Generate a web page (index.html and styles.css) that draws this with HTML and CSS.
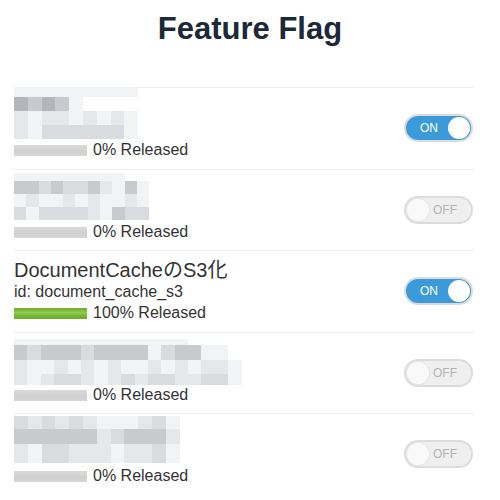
FILE: index.html
```html
<!DOCTYPE html>
<html lang="ja">
<head>
<meta charset="utf-8">
<title>Feature Flag</title>
<link rel="stylesheet" href="styles.css">
</head>
<body>
<h1 class="page-title">Feature Flag</h1>
<ul class="flag-list">
  <li class="flag-row">
    <div class="flag-info">
      <div class="title-area">
        <div class="mosaic m1">
          <i class="c1"></i><i class="c1"></i><i class="c1"></i><i class="c1"></i><i class="c1"></i><i class="c1"></i><i class="c1"></i><i class="c1"></i><i class="c1"></i>
          <i class="c5"></i><i class="c4"></i><i class="c5"></i><i class="c4"></i><i class="c1"></i><i class="c0"></i><i class="c0"></i><i class="c0"></i><i class="c0"></i>
          <i class="c2"></i><i class="c1"></i><i class="c2"></i><i class="c2"></i><i class="c1"></i><i class="c2"></i><i class="c1"></i><i class="c2"></i><i class="c1"></i>
          <i class="c2"></i><i class="c1"></i><i class="c3"></i><i class="c3"></i><i class="c3"></i><i class="c3"></i><i class="c3"></i><i class="c3"></i><i class="c1"></i>
        </div>
      </div>
      <div class="progress-line"><span class="bar"><span class="fill"></span></span><span class="pct">0% Released</span></div>
    </div>
    <div class="toggle on"><span class="label">ON</span><span class="knob"></span></div>
  </li>
  <li class="flag-row">
    <div class="flag-info">
      <div class="title-area">
        <div class="mosaic m2">
          <i class="c1"></i><i class="c1"></i><i class="c1"></i><i class="c1"></i><i class="c1"></i><i class="c1"></i><i class="c1"></i><i class="c1"></i><i class="c1"></i><i class="c0"></i><i class="c0"></i>
          <i class="c4"></i><i class="c4"></i><i class="c3"></i><i class="c4"></i><i class="c3"></i><i class="c3"></i><i class="c4"></i><i class="c2"></i><i class="c1"></i><i class="c4"></i><i class="c1"></i>
          <i class="c1"></i><i class="c2"></i><i class="c1"></i><i class="c1"></i><i class="c2"></i><i class="c1"></i><i class="c2"></i><i class="c1"></i><i class="c1"></i><i class="c2"></i><i class="c1"></i>
          <i class="c3"></i><i class="c1"></i><i class="c3"></i><i class="c3"></i><i class="c3"></i><i class="c3"></i><i class="c2"></i><i class="c1"></i><i class="c4"></i><i class="c3"></i><i class="c3"></i>
        </div>
      </div>
      <div class="progress-line"><span class="bar"><span class="fill"></span></span><span class="pct">0% Released</span></div>
    </div>
    <div class="toggle off"><span class="knob"></span><span class="label">OFF</span></div>
  </li>
  <li class="flag-row">
    <div class="flag-info">
      <div class="title-area">
        <div class="flag-name">DocumentCacheのS3化</div>
        <div class="flag-id">id: document_cache_s3</div>
      </div>
      <div class="progress-line"><span class="bar"><span class="fill full"></span></span><span class="pct">100% Released</span></div>
    </div>
    <div class="toggle on"><span class="label">ON</span><span class="knob"></span></div>
  </li>
  <li class="flag-row">
    <div class="flag-info">
      <div class="title-area">
        <div class="mosaic m4">
          <i class="c1"></i><i class="c1"></i><i class="c1"></i><i class="c1"></i><i class="c1"></i><i class="c1"></i><i class="c1"></i><i class="c1"></i><i class="c1"></i><i class="c1"></i><i class="c1"></i><i class="c1"></i><i class="c1"></i><i class="c0"></i><i class="c0"></i><i class="c0"></i><i class="c0"></i>
          <i class="c4"></i><i class="c3"></i><i class="c4"></i><i class="c4"></i><i class="c4"></i><i class="c3"></i><i class="c4"></i><i class="c4"></i><i class="c4"></i><i class="c4"></i><i class="c1"></i><i class="c3"></i><i class="c4"></i><i class="c4"></i><i class="c1"></i><i class="c1"></i><i class="c0"></i>
          <i class="c2"></i><i class="c1"></i><i class="c1"></i><i class="c2"></i><i class="c1"></i><i class="c2"></i><i class="c1"></i><i class="c2"></i><i class="c1"></i><i class="c1"></i><i class="c2"></i><i class="c1"></i><i class="c2"></i><i class="c1"></i><i class="c2"></i><i class="c2"></i><i class="c1"></i>
          <i class="c2"></i><i class="c1"></i><i class="c2"></i><i class="c3"></i><i class="c3"></i><i class="c2"></i><i class="c1"></i><i class="c2"></i><i class="c3"></i><i class="c2"></i><i class="c3"></i><i class="c3"></i><i class="c2"></i><i class="c2"></i><i class="c3"></i><i class="c3"></i><i class="c1"></i>
        </div>
      </div>
      <div class="progress-line"><span class="bar"><span class="fill"></span></span><span class="pct">0% Released</span></div>
    </div>
    <div class="toggle off"><span class="knob"></span><span class="label">OFF</span></div>
  </li>
  <li class="flag-row">
    <div class="flag-info">
      <div class="title-area">
        <div class="mosaic m5">
          <i class="c3"></i><i class="c2"></i><i class="c3"></i><i class="c2"></i><i class="c3"></i><i class="c2"></i><i class="c1"></i><i class="c1"></i><i class="c1"></i><i class="c2"></i><i class="c3"></i><i class="c1"></i>
          <i class="c4"></i><i class="c4"></i><i class="c4"></i><i class="c4"></i><i class="c4"></i><i class="c4"></i><i class="c2"></i><i class="c3"></i><i class="c4"></i><i class="c4"></i><i class="c4"></i><i class="c2"></i>
          <i class="c2"></i><i class="c1"></i><i class="c3"></i><i class="c3"></i><i class="c2"></i><i class="c2"></i><i class="c2"></i><i class="c1"></i><i class="c2"></i><i class="c2"></i><i class="c3"></i><i class="c1"></i>
        </div>
      </div>
      <div class="progress-line"><span class="bar"><span class="fill"></span></span><span class="pct">0% Released</span></div>
    </div>
    <div class="toggle off"><span class="knob"></span><span class="label">OFF</span></div>
  </li>
</ul>
</body>
</html>
```
FILE: styles.css
```css
html, body {
  margin: 0;
  padding: 0;
  background: #ffffff;
}
body {
  font-family: "Liberation Sans", "Noto Sans CJK JP", sans-serif;
  color: #333333;
}
.page-title {
  margin: 11px 0 0 0;
  text-align: center;
  font-size: 31px;
  line-height: 36px;
  font-weight: bold;
  color: #1b2938;
}
.flag-list {
  list-style: none;
  margin: 40px 26px 0 14px;
  padding: 0;
}
.flag-row {
  display: flex;
  align-items: center;
  justify-content: space-between;
  border-top: 1px solid #ededed;
  padding: 6.5px 0 7px 0;
}
.flag-info {
  display: flex;
  flex-direction: column;
}
.title-area {
  height: 44px;
}
.flag-name {
  font-size: 20px;
  line-height: 24px;
}
.flag-id {
  font-size: 16px;
  line-height: 20px;
}
.progress-line {
  display: flex;
  align-items: center;
  height: 23px;
  font-size: 16px;
}
.bar {
  display: block;
  width: 73px;
  height: 11px;
  background: linear-gradient(#dadada, #d0d0d0 60%, #d8d8d8);
  margin-right: 6px;
  margin-top: 1px;
}
.fill {
  display: block;
  height: 100%;
  width: 0;
}
.fill.full {
  width: 100%;
  background: linear-gradient(#6aab2a, #93cc55 45%, #7bbc3a 60%, #6aab2a);
}
.pct {
  line-height: 20px;
}

/* mosaic */
.mosaic {
  display: grid;
}
.mosaic i {
  display: block;
}
.m1 {
  margin-top: -8px;
  grid-template-columns: repeat(9, 13.8px);
  grid-template-rows: 10px 14px 14px 14px;
}
.m2 {
  margin-top: -3px;
  grid-template-columns: repeat(11, 12.3px);
  grid-template-rows: 8px 13px 13px 13px;
}
.m4 {
  margin-top: 0;
  grid-template-columns: repeat(17, 13.4px);
  grid-template-rows: 6px 15px 14px 11px;
}
.m5 {
  margin-top: -5px;
  grid-template-columns: repeat(12, 13.8px);
  grid-template-rows: 13px 15px 19px;
}
.c0 { background: #ffffff; }
.c1 { background: #f2f3f5; }
.c2 { background: #e6e7ea; }
.c3 { background: #d9dbde; }
.c4 { background: #c8cacd; }
.c5 { background: #b4b6bb; }

/* toggle */
.toggle {
  position: relative;
  box-sizing: border-box;
  width: 69px;
  height: 28px;
  border-radius: 14px;
  border: 2px solid #dcdcdc;
  display: flex;
  align-items: center;
  font-size: 12px;
  margin-right: 1px;
}
.toggle.on {
  background: #3b9ad9;
  color: #ffffff;
  justify-content: space-between;
  padding: 0 1px 0 14px;
}
.toggle.off {
  background: #efefef;
  color: #b3b3b3;
  justify-content: space-between;
  padding: 0 14px 0 1px;
}
.knob {
  display: block;
  width: 22px;
  height: 22px;
  border-radius: 50%;
  background: #ffffff;
}
.toggle.off .knob {
  background: #f9f9f9;
  box-shadow: 0 0 0 1px #e6e6e6;
}
```
